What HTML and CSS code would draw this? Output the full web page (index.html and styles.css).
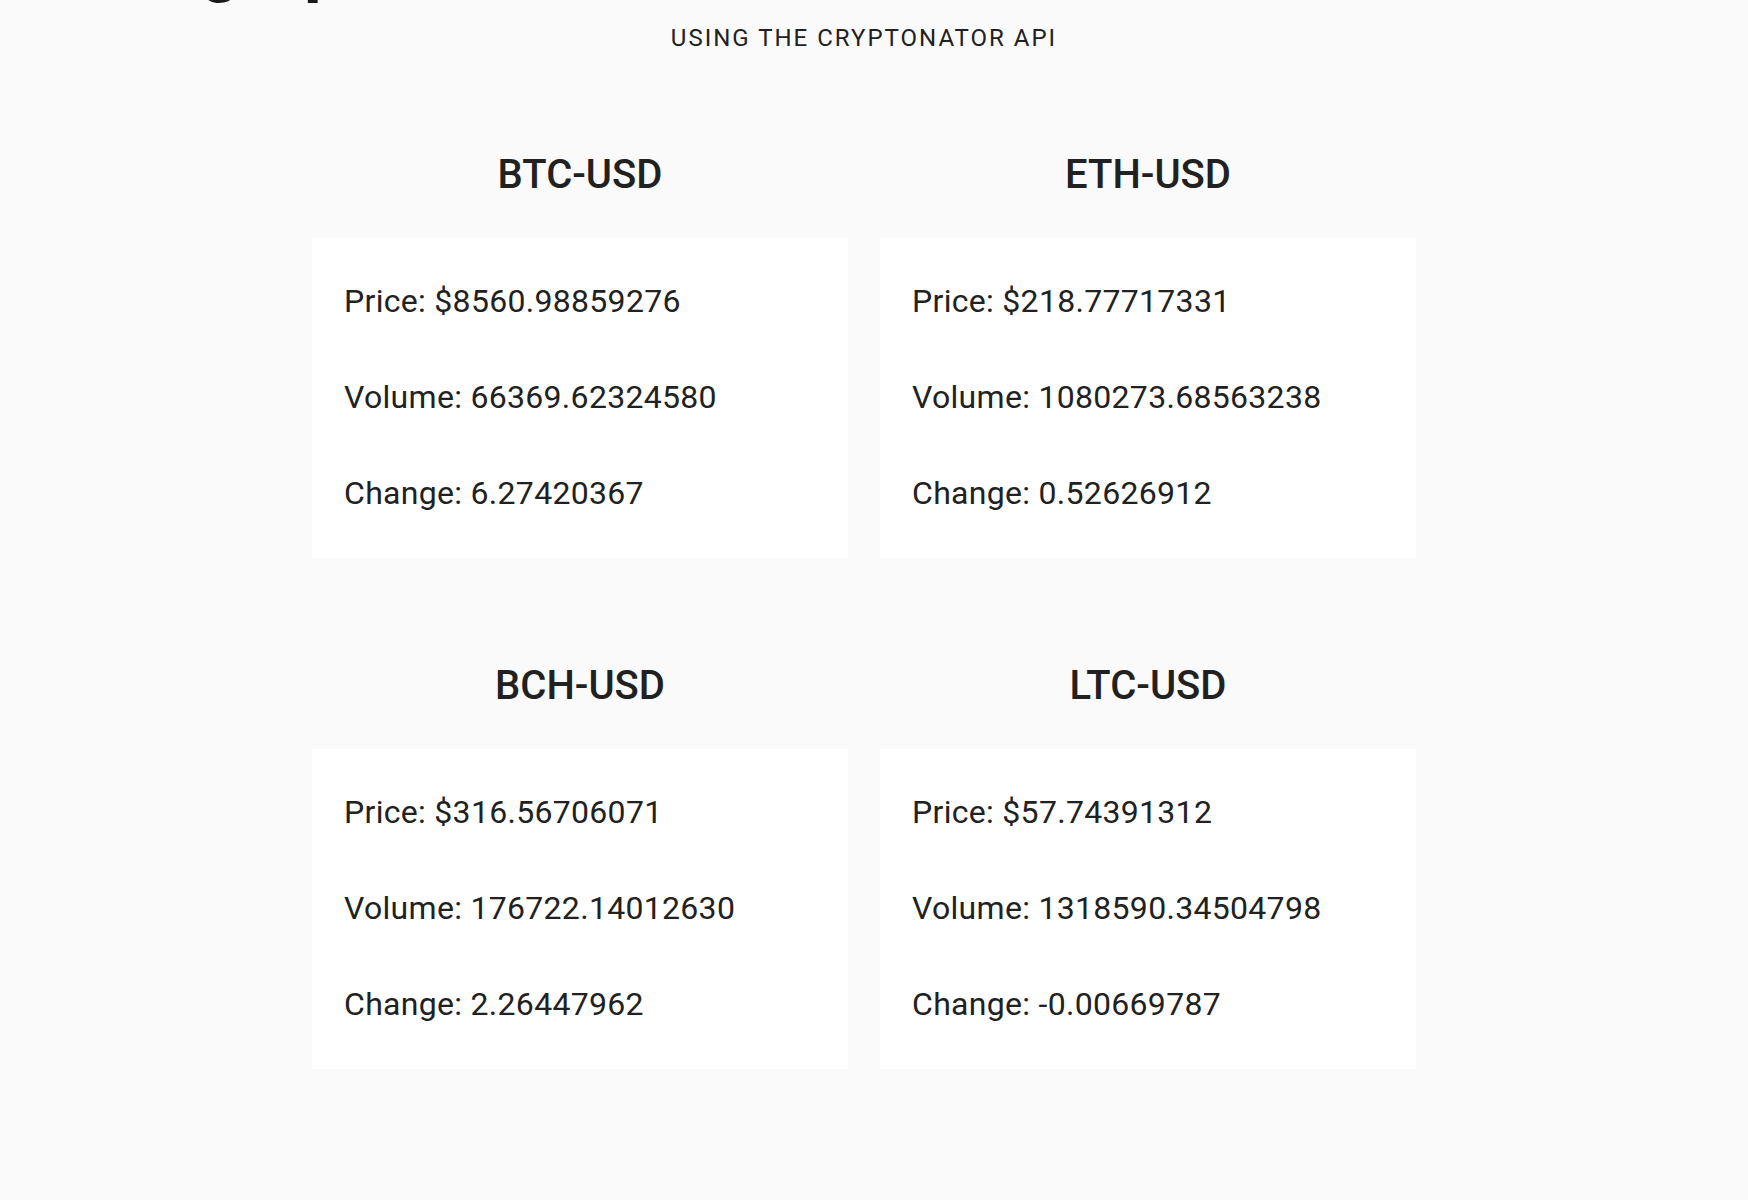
FILE: index.html
```html
<!DOCTYPE html>
<html lang="en">
<head>
<meta charset="utf-8">
<title>Cryptocurrency Pricing</title>
<link rel="stylesheet" href="styles.css">
</head>
<body>
<div class="page">
  <header class="header">
    <h1 class="title">Pricing Updates</h1>
    <p class="subtitle">Using the Cryptonator API</p>
  </header>
  <main class="grid">
    <section class="coin">
      <h2 class="coin-name">BTC-USD</h2>
      <div class="card">
        <p class="row">Price: $8560.98859276</p>
        <p class="row">Volume: 66369.62324580</p>
        <p class="row">Change: 6.27420367</p>
      </div>
    </section>
    <section class="coin">
      <h2 class="coin-name">ETH-USD</h2>
      <div class="card">
        <p class="row">Price: $218.77717331</p>
        <p class="row">Volume: 1080273.68563238</p>
        <p class="row">Change: 0.52626912</p>
      </div>
    </section>
    <section class="coin">
      <h2 class="coin-name">BCH-USD</h2>
      <div class="card">
        <p class="row">Price: $316.56706071</p>
        <p class="row">Volume: 176722.14012630</p>
        <p class="row">Change: 2.26447962</p>
      </div>
    </section>
    <section class="coin">
      <h2 class="coin-name">LTC-USD</h2>
      <div class="card">
        <p class="row">Price: $57.74391312</p>
        <p class="row">Volume: 1318590.34504798</p>
        <p class="row">Change: -0.00669787</p>
      </div>
    </section>
  </main>
</div>
</body>
</html>
```

FILE: styles.css
```css
html, body {
  margin: 0;
  padding: 0;
  background: #fafafa;
}

body {
  font-family: Roboto, "Noto Sans", "Liberation Sans", sans-serif;
  color: #212121;
  overflow: hidden;
}

.page {
  width: 1728px;
}

.header {
  display: flex;
  flex-direction: column;
}

.title {
  margin: -75px 0 0 0;
  padding-left: 17px;
  font-size: 70px;
  line-height: 80px;
  font-weight: 700;
  color: #1a1a1a;
  white-space: nowrap;
}

.subtitle {
  margin: 17px 0 0 0;
  font-size: 24px;
  line-height: 32px;
  letter-spacing: 2px;
  text-transform: uppercase;
  text-align: center;
  font-weight: 400;
}

.grid {
  display: grid;
  grid-template-columns: 536px 536px;
  column-gap: 32px;
  row-gap: 104px;
  justify-content: center;
  margin-top: 97px;
}

.coin {
  display: flex;
  flex-direction: column;
}

.coin-name {
  margin: 0 0 39px 0;
  font-size: 40px;
  line-height: 48px;
  font-weight: 500;
  text-align: center;
}

.card {
  background: #ffffff;
  padding: 31px 32px 33px;
  display: flex;
  flex-direction: column;
  gap: 32px;
}

.row {
  margin: 0;
  font-size: 32px;
  line-height: 64px;
  letter-spacing: 0.3px;
  font-weight: 400;
}
```
